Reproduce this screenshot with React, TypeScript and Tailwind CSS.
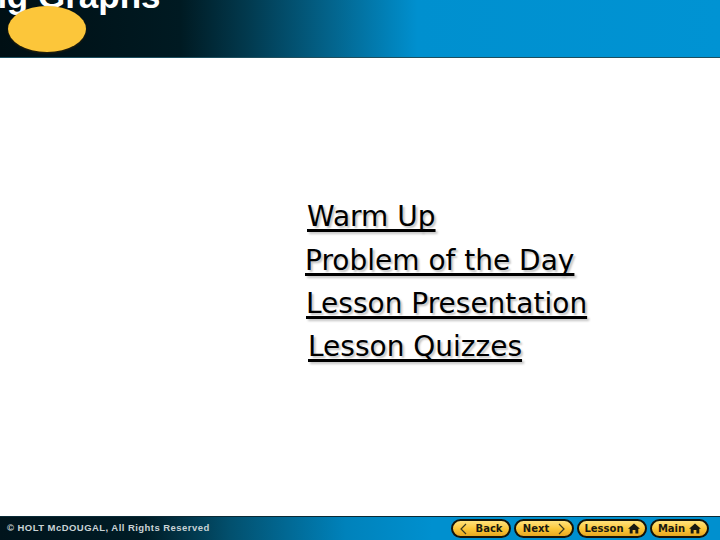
const links = [
  { label: 'Warm Up', row: 'ml-[1px] h-[44px]' },
  { label: 'Problem of the Day', row: 'ml-[-1px] h-[43px]' },
  { label: 'Lesson Presentation', row: 'ml-[0px] h-[43px]' },
  { label: 'Lesson Quizzes', row: 'ml-[2px] h-[43px]' },
];

function HomeIcon() {
  return (
    <svg width="12" height="11" viewBox="0 0 13 12" className="ml-[4px]">
      <path d="M6.5 0.5 L13 6.2 L11.2 6.2 L11.2 11.5 L8 11.5 L8 7.5 L5 7.5 L5 11.5 L1.8 11.5 L1.8 6.2 L0 6.2 Z" fill="#1a1a10" />
    </svg>
  );
}

function Chevron({ left }: { left?: boolean }) {
  return (
    <svg width="7" height="12" viewBox="0 0 7 12">
      <path d={left ? 'M6 1 L1 6 L6 11' : 'M1 1 L6 6 L1 11'} fill="none" stroke="#3a3a20" strokeWidth="1.2" />
    </svg>
  );
}

function NavButton({ className, children }: { className: string; children: React.ReactNode }) {
  return (
    <div
      className={`${className} h-[19px] flex items-center justify-center rounded-full border-2 border-[#14140a] bg-gradient-to-b from-[#ffe27a] via-[#fcc93a] to-[#e8a820] text-[10px] font-bold text-[#1a1a10] font-['DejaVu_Sans',sans-serif]`}
    >
      {children}
    </div>
  );
}

export default function App() {
  return (
    <div className="w-[720px] h-[540px] bg-white flex flex-col overflow-hidden font-['DejaVu_Sans',sans-serif]">
      <header className="relative h-[58px] shrink-0 overflow-hidden border-b border-[#1d4f5f] bg-[linear-gradient(90deg,#000f14_0%,#001a22_25%,#02384c_34%,#03648c_46%,#0090cf_58%,#0093d3_100%)]">
        <div className="mt-[-24px] ml-[-69px] whitespace-nowrap text-[35px] leading-[40px] font-bold text-white font-['Liberation_Sans',sans-serif]">
          Using Graphs
        </div>
        <div className="absolute left-[8px] top-[6px] w-[78px] h-[46px] rounded-[50%] bg-[#fcc63a] shadow-[0_1px_2px_rgba(60,40,0,0.8)]" />
      </header>

      <main className="flex-1 pt-[138px] pl-[306px] flex flex-col">
        {links.map((link) => (
          <div
            key={link.label}
            className={`${link.row} whitespace-nowrap text-[28px] leading-[42px] text-black underline decoration-[3px] underline-offset-[3px] [text-decoration-skip-ink:none] [text-shadow:2px_2px_2px_#c4c4c4]`}
          >
            {link.label}
          </div>
        ))}
      </main>

      <footer className="h-[24px] shrink-0 flex items-center justify-between pl-[7px] pr-[11px] border-t border-[#0a2a36] bg-[linear-gradient(90deg,#00141c_0%,#001c26_20%,#02506e_32%,#0082bb_48%,#0090cf_60%,#0090cf_100%)]">
        <div className="text-[9.5px] font-bold tracking-[0.45px] whitespace-nowrap text-[#c9d3d6] font-['Liberation_Sans',sans-serif]">
          © HOLT McDOUGAL, All Rights Reserved
        </div>
        <div className="flex gap-[3px]">
          <NavButton className="w-[60px] gap-[9px]">
            <Chevron left />
            <span>Back</span>
          </NavButton>
          <NavButton className="w-[60px] gap-[9px]">
            <span>Next</span>
            <Chevron />
          </NavButton>
          <NavButton className="w-[70px]">
            <span>Lesson</span>
            <HomeIcon />
          </NavButton>
          <NavButton className="w-[59px]">
            <span>Main</span>
            <HomeIcon />
          </NavButton>
        </div>
      </footer>
    </div>
  );
}
